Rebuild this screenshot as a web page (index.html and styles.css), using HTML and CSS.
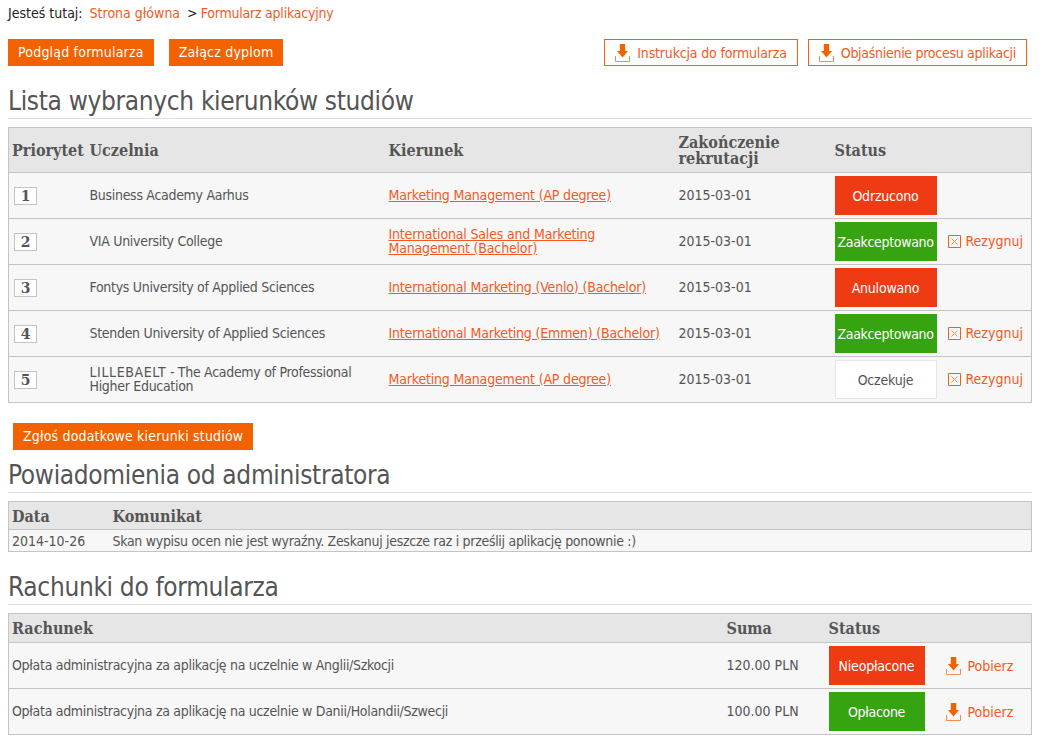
FILE: index.html
```html
<!DOCTYPE html>
<html lang="pl">
<head>
<meta charset="utf-8">
<title>Formularz aplikacyjny</title>
<link rel="stylesheet" href="styles.css">
</head>
<body>
<svg class="defs" width="0" height="0" aria-hidden="true">
  <symbol id="dl" viewBox="0 0 15 18">
    <path d="M4.800 0h5.400v7H13l-5.500 6.500L2 7h2.800z" fill="#f26200"/>
    <path d="M.5 12v5.500h14V12" fill="none" stroke="#f58c4c"/>
  </symbol>
  <symbol id="cross" viewBox="0 0 13 13">
    <path d="M.5.500h12v12H.5z" fill="none" stroke="#f26200"/>
    <path d="M3.500 3.500l6 6M9.500 3.500l-6 6" fill="none" stroke="#f58c4c"/>
  </symbol>
</svg>
<nav class="crumbs"><span class="crumb-label">Jesteś tutaj:</span><a class="crumb-home" href="#">Strona główna</a><span class="crumb-sep">&gt;</span><a href="#">Formularz aplikacyjny</a></nav>
<div class="toolbar">
  <div class="toolbar-group">
    <a class="btn" href="#">Podgląd formularza</a>
    <a class="btn" href="#">Załącz dyplom</a>
  </div>
  <div class="toolbar-group toolbar-right">
    <a class="btn-outline wide" href="#"><svg class="ico"><use href="#dl"/></svg>Instrukcja do formularza</a>
    <a class="btn-outline" href="#"><svg class="ico"><use href="#dl"/></svg>Objaśnienie procesu aplikacji</a>
  </div>
</div>
<h2 class="title first">Lista wybranych kierunków studiów</h2>
<table class="grid choices">
  <colgroup><col class="c1"><col class="c2"><col class="c3"><col class="c4"><col class="c5"><col></colgroup>
  <thead><tr><th>Priorytet</th><th>Uczelnia</th><th>Kierunek</th><th>Zakończenie<br>rekrutacji</th><th>Status</th><th></th></tr></thead>
  <tbody>
    <tr><td><span class="prio">1</span></td><td class="txt">Business Academy Aarhus</td><td><a class="link" href="#">Marketing Management (AP degree)</a></td><td>2015-03-01</td><td><span class="status red">Odrzucono</span></td><td></td></tr>
    <tr><td><span class="prio">2</span></td><td class="txt">VIA University College</td><td><a class="link" href="#">International Sales and Marketing Management (Bachelor)</a></td><td>2015-03-01</td><td><span class="status green">Zaakceptowano</span></td><td><a class="act" href="#"><svg class="x"><use href="#cross"/></svg>Rezygnuj</a></td></tr>
    <tr><td><span class="prio">3</span></td><td class="txt">Fontys University of Applied Sciences</td><td><a class="link" href="#">International Marketing (Venlo) (Bachelor)</a></td><td>2015-03-01</td><td><span class="status red">Anulowano</span></td><td></td></tr>
    <tr><td><span class="prio">4</span></td><td class="txt">Stenden University of Applied Sciences</td><td><a class="link" href="#">International Marketing (Emmen) (Bachelor)</a></td><td>2015-03-01</td><td><span class="status green">Zaakceptowano</span></td><td><a class="act" href="#"><svg class="x"><use href="#cross"/></svg>Rezygnuj</a></td></tr>
    <tr><td><span class="prio">5</span></td><td class="txt"><span class="caps">LILLEBAELT</span> - The Academy of Professional Higher Education</td><td><a class="link" href="#">Marketing Management (AP degree)</a></td><td>2015-03-01</td><td><span class="status white">Oczekuje</span></td><td><a class="act" href="#"><svg class="x"><use href="#cross"/></svg>Rezygnuj</a></td></tr>
  </tbody>
</table>
<div class="more"><a class="btn" href="#">Zgłoś dodatkowe kierunki studiów</a></div>
<h2 class="title">Powiadomienia od administratora</h2>
<table class="grid notes">
  <colgroup><col class="n1"><col></colgroup>
  <thead><tr><th>Data</th><th>Komunikat</th></tr></thead>
  <tbody><tr><td>2014-10-26</td><td class="txt">Skan wypisu ocen nie jest wyraźny. Zeskanuj jeszcze raz i prześlij aplikację ponownie :)</td></tr></tbody>
</table>
<h2 class="title third">Rachunki do formularza</h2>
<table class="grid bills">
  <colgroup><col class="b1"><col class="b2"><col class="b3"><col></colgroup>
  <thead><tr><th>Rachunek</th><th>Suma</th><th>Status</th><th></th></tr></thead>
  <tbody>
    <tr><td class="txt">Opłata administracyjna za aplikację na uczelnie w Anglii/Szkocji</td><td>120.00 PLN</td><td><span class="status red">Nieopłacone</span></td><td><a class="act" href="#"><svg class="ico"><use href="#dl"/></svg>Pobierz</a></td></tr>
    <tr><td class="txt">Opłata administracyjna za aplikację na uczelnie w Danii/Holandii/Szwecji</td><td>100.00 PLN</td><td><span class="status green">Opłacone</span></td><td><a class="act" href="#"><svg class="ico"><use href="#dl"/></svg>Pobierz</a></td></tr>
  </tbody>
</table>
</body>
</html>
```
FILE: styles.css
```css
* { box-sizing: border-box; }
html, body { margin: 0; padding: 0; }
body {
  width: 1045px;
  padding: 5px 13px 0 8px;
  font-family: "DejaVu Sans", sans-serif;
  font-stretch: condensed;
  font-size: 14px;
  line-height: 16px;
  color: #555;
  background: #fff;
}
a { text-decoration: none; color: #f45a1e; }
.defs { position: absolute; }
.crumbs { height: 16px; color: #222; display: flex; gap: 7px; }
.crumbs a { letter-spacing: -0.22px; }
.crumbs .crumb-home { letter-spacing: 0; }
.crumb-sep { margin-right: -4px; }
.toolbar { display: flex; justify-content: space-between; margin-top: 18px; padding-right: 5px; }
.toolbar-group { display: flex; gap: 15px; }
.toolbar-right { gap: 10px; }
.btn { display: inline-block; height: 27px; line-height: 27px; padding: 0 10px; background: #f26200; color: #fff; letter-spacing: 0.2px; }
.more .btn { letter-spacing: 0.17px; }
.btn-outline { display: flex; align-items: center; height: 27px; padding: 0 10px; border: 1px solid #f26200; letter-spacing: -0.28px; }
.btn-outline.wide { letter-spacing: -0.17px; }
.ico { width: 15px; height: 18px; margin-right: 7px; flex: none; }
.title { margin: 0; font-weight: 400; font-size: 26px; height: 33px; line-height: 30px; letter-spacing: -0.33px; color: #555; border-bottom: 1px solid #ddd; }
.first { margin-top: 20px; }
.grid { width: 1024px; border-collapse: collapse; table-layout: fixed; border: 1px solid #c4c4c4; margin-top: 8px; background: #f7f7f7; }
.grid th { background: #e6e6e6; text-align: left; font-family: "DejaVu Serif", serif; font-size: 16px; font-weight: 700; padding: 0 3px; line-height: 16px; }
.grid td { padding: 0 3px; border-top: 1px solid #c4c4c4; height: 46px; line-height: 14px; }
.grid .txt { letter-spacing: -0.3px; }
.choices td:nth-child(2), .choices td:nth-child(3), .choices td:nth-child(4), .bills td:nth-child(1), .bills td:nth-child(2) { padding-bottom: 2px; }
.caps { letter-spacing: 0.6px; }
.choices th { height: 45px; padding-top: 2px; }
.c1 { width: 78px; } .c2 { width: 299px; } .c3 { width: 290px; } .c4 { width: 156px; } .c5 { width: 112px; }
.prio { display: inline-block; width: 23px; height: 18px; margin-left: 2px; border: 1px solid #c4c4c4; background: #fff; text-align: center; font: 700 14px/16px "DejaVu Serif", serif; }
.link { text-decoration: underline; letter-spacing: -0.17px; }
.status { display: flex; align-items: center; justify-content: center; width: 102px; height: 39px; color: #fff; letter-spacing: -0.2px; }
.red { background: #ee3b13; }
.green { background: #36a311; letter-spacing: -0.33px; }
.white { background: #fff; color: #555; border: 1px solid #e6e6e6; }
.act { display: inline-flex; align-items: center; padding-top: 1px; }
.x { width: 13px; height: 13px; margin: 0 5px 0 1px; flex: none; }
.more { margin: 20px 0 10px 5px; height: 27px; }
.notes th { height: 28px; padding-top: 2px; }
.notes td { height: 22px; }
.n1 { width: 101px; }
.third { margin-top: 20px; }
.bills th { height: 29px; padding-top: 1px; }
.b1 { width: 715px; } .b2 { width: 102px; } .b3 { width: 117px; }
.bills .status { width: 96px; }
.bills .act { padding-top: 3px; }
```
